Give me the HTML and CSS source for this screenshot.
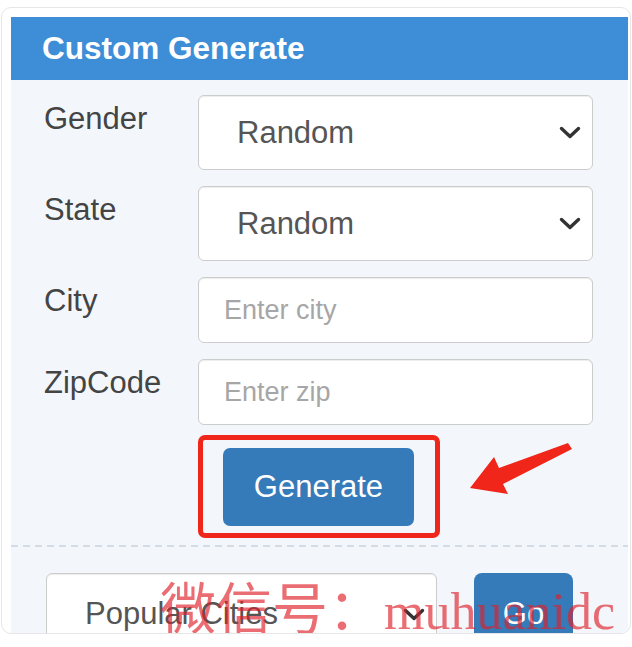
FILE: index.html
```html
<!DOCTYPE html>
<html lang="en">
<head>
  <meta charset="UTF-8">
  <title>Custom Generate</title>
  <link rel="stylesheet" href="styles.css">
</head>
<body>
  <div class="card">
    <div class="panel">
      <!-- Panel title -->
      <div class="panel-heading">Custom Generate</div>

      <!-- Generator form -->
      <div class="form">
        <label class="label">Gender</label>
        <div class="select">
          <span>Random</span>
          <svg class="chevron" width="22" height="13" viewBox="0 0 22 13"><polyline points="2.5,2.5 11,10.5 19.5,2.5"/></svg>
        </div>

        <label class="label">State</label>
        <div class="select">
          <span>Random</span>
          <svg class="chevron" width="22" height="13" viewBox="0 0 22 13"><polyline points="2.5,2.5 11,10.5 19.5,2.5"/></svg>
        </div>

        <label class="label" for="city">City</label>
        <input class="input" id="city" type="text" placeholder="Enter city">

        <label class="label" for="zip">ZipCode</label>
        <input class="input" id="zip" type="text" placeholder="Enter zip">
      </div>

      <!-- Generate button, marked up with the red box and arrow -->
      <div class="action-row">
        <div class="highlight">
          <button class="btn btn-generate">Generate</button>
        </div>
        <svg class="arrow" width="110" height="60" viewBox="0 0 110 60">
          <polygon points="5,48 29,17 34,28 103,3 107,9 38,44 43,54"/>
        </svg>
      </div>

      <div class="divider"></div>

      <!-- Popular cities -->
      <div class="popular">
        <div class="select select-popular">
          <span>Popular Cities</span>
          <svg class="chevron" width="22" height="13" viewBox="0 0 22 13"><polyline points="2.5,2.5 11,10.5 19.5,2.5"/></svg>
        </div>
        <button class="btn btn-go">Go</button>
        <div class="watermark"><span class="wm-cjk">微信号：</span><span class="wm-latin">muhuanidc</span></div>
      </div>
    </div>
  </div>
</body>
</html>
```

FILE: styles.css
```css
/* Basic Reset */
body, div, button, input, label {
  margin: 0;
  padding: 0;
  box-sizing: border-box;
}

body {
  font-family: "Liberation Sans", Arial, sans-serif;
  background-color: #fff;
}

/* Outer white card */
.card {
  margin: 7px 1px 0 1px;
  height: 627px;
  padding: 9px 2px 0 9px;
  border: 1px solid #e6e6e6;
  border-radius: 10px;
  overflow: hidden;
  display: flex;
  flex-direction: column;
}

.panel {
  flex: 1;
  background-color: #f3f7fc;
}

.panel-heading {
  height: 63px;
  display: flex;
  align-items: center;
  padding-left: 31px;
  background-color: #3e8ed7;
  color: #fff;
  font-size: 31.5px;
  font-weight: bold;
}

/* Label + field grid */
.form {
  display: grid;
  grid-template-columns: 187px 395px;
  grid-template-rows: 75px 75px 66px 66px;
  row-gap: 16px;
  padding-top: 15px;
}

.label {
  padding: 6px 0 0 33px;
  font-size: 31px;
  line-height: 36px;
  color: #444;
}

.select {
  display: flex;
  align-items: center;
  justify-content: space-between;
  padding: 0 11px 0 38px;
  background-color: #fff;
  border: 1px solid #ccc;
  border-radius: 6px;
  box-shadow: inset 0 1px 1px rgba(0, 0, 0, 0.075);
  font-size: 31px;
  color: #555;
}

.chevron polyline {
  fill: none;
  stroke: #333;
  stroke-width: 3.4;
  stroke-linecap: round;
  stroke-linejoin: round;
}

.input {
  width: 100%;
  height: 100%;
  padding: 0 25px;
  background-color: #fff;
  border: 1px solid #ccc;
  border-radius: 6px;
  box-shadow: inset 0 1px 1px rgba(0, 0, 0, 0.075);
  font-family: inherit;
  font-size: 27px;
  color: #555;
}

.input::placeholder {
  color: #a6a6a6;
}

/* Buttons */
.btn {
  border: none;
  border-radius: 7px;
  background-color: #367bb9;
  color: #fff;
  font-family: inherit;
  font-size: 31px;
}

.action-row {
  display: flex;
  align-items: flex-start;
  margin: 10px 0 0 187px;
}

.highlight {
  width: 242px;
  height: 103px;
  padding: 8px 0 0 20px;
  border: 5px solid #f0261a;
  border-radius: 7px;
}

.btn-generate {
  width: 191px;
  height: 78px;
}

.arrow {
  margin: 5px 0 0 25px;
}

.arrow polygon {
  fill: #f0261a;
}

/* Dashed separator */
.divider {
  height: 2px;
  margin-top: 7px;
  background: repeating-linear-gradient(90deg, #d3dbe4 0 7px, transparent 7px 12px);
}

.popular {
  position: relative;
  display: flex;
  gap: 37px;
  margin-top: 26px;
  padding-left: 35px;
}

.select-popular {
  width: 391px;
  height: 82px;
}

.btn-go {
  width: 99px;
  height: 82px;
  border-radius: 8px;
}

/* Watermark over the bottom row */
.watermark {
  position: absolute;
  left: 149px;
  top: 4px;
  line-height: 56px;
  color: rgba(222, 30, 40, 0.65);
  white-space: nowrap;
}

.wm-cjk {
  font-family: "Noto Sans CJK SC", sans-serif;
  font-size: 56px;
}

.wm-latin {
  font-family: "Liberation Serif", serif;
  font-size: 52px;
}
```
